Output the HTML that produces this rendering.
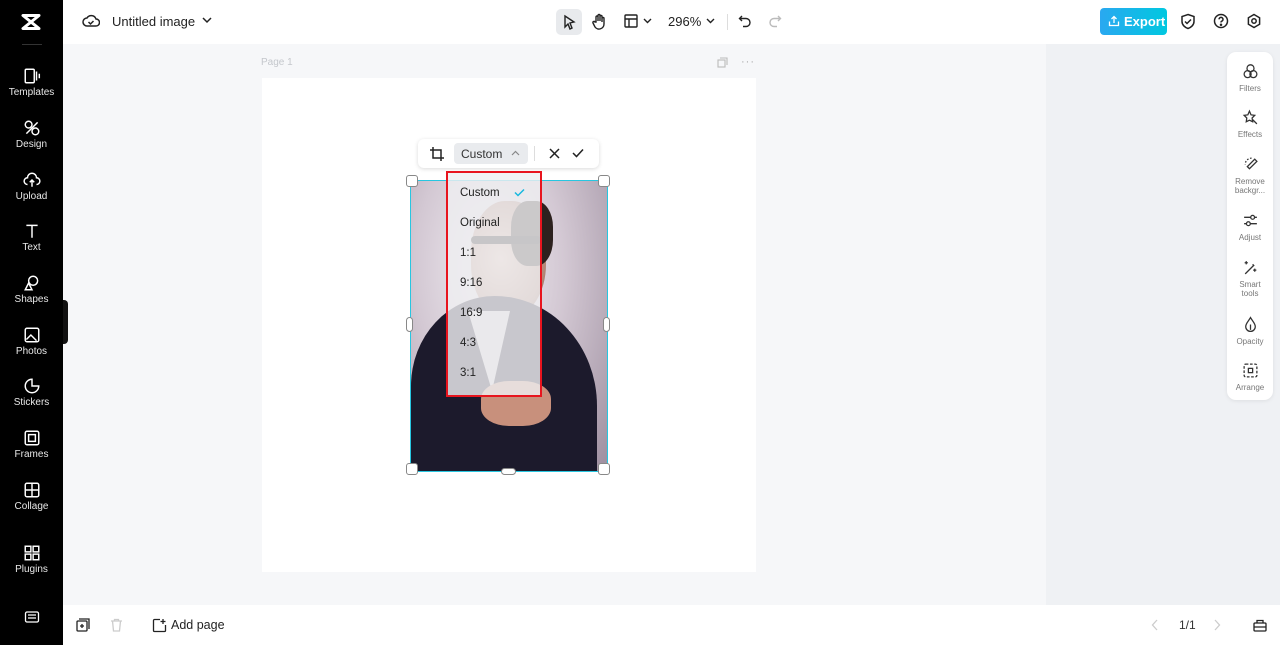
<!DOCTYPE html><html><head><style>
*{margin:0;padding:0;box-sizing:border-box}
body{width:1280px;height:645px;overflow:hidden;font-family:"Liberation Sans",sans-serif;background:#f6f7f9;position:relative;color:#1f2329}
.abs{position:absolute}
#side{left:0;top:0;width:63px;height:645px;background:#000;color:#fff}
.si{position:absolute;left:0;width:63px;text-align:center;font-size:10px;color:#e8e8e8}
.si svg{display:block;margin:0 auto 2px}
#top{left:63px;top:0;width:1217px;height:44px;background:#fff}
#bot{left:63px;top:605px;width:1217px;height:40px;background:#fff}
#right{left:1046px;top:44px;width:234px;height:561px;background:#eff1f4}
#rp{left:1227px;top:52px;width:46px;height:348px;background:#fff;border-radius:9px;box-shadow:0 1px 4px rgba(0,0,0,.08)}
.ri{position:absolute;left:0;width:46px;text-align:center;font-size:8px;color:#777;line-height:9px}
.ri svg{display:block;margin:0 auto 4px}
.dd{position:absolute;left:12px;font-size:11.5px;color:#222}
</style></head><body>
<div id="side" class="abs">
<svg class="abs" style="left:20px;top:12px" width="22" height="20" viewBox="0 0 22 20"><path d="M3 3.5h16L3 16.5h16z" fill="none" stroke="#fff" stroke-width="3" stroke-linejoin="round"/></svg>
<div class="abs" style="left:22px;top:44px;width:20px;height:1px;background:#333"></div>
<div class="si" style="top:67px"><svg width="18" height="18" viewBox="0 0 16 16" fill="none" stroke="#fff" stroke-width="1.3"><rect x="2" y="2" width="8" height="12" rx="1"/><path d="M12 4v8M14.5 6v4"/></svg>Templates</div>
<div class="si" style="top:119px"><svg width="18" height="18" viewBox="0 0 16 16" fill="none" stroke="#fff" stroke-width="1.3"><circle cx="5" cy="5" r="3"/><circle cx="11" cy="11" r="3"/><path d="M3 13l10-10"/></svg>Design</div>
<div class="si" style="top:171px"><svg width="18" height="18" viewBox="0 0 16 16" fill="none" stroke="#fff" stroke-width="1.3"><path d="M4 12a3 3 0 0 1 0-6 4 4 0 0 1 8 0 3 3 0 0 1 0 6M8 8v6M6 10l2-2 2 2"/></svg>Upload</div>
<div class="si" style="top:222px"><svg width="18" height="18" viewBox="0 0 16 16" fill="none" stroke="#fff" stroke-width="1.3"><path d="M3 3h10M8 3v11"/></svg>Text</div>
<div class="si" style="top:274px"><svg width="18" height="18" viewBox="0 0 16 16" fill="none" stroke="#fff" stroke-width="1.3"><circle cx="9" cy="6" r="4"/><path d="M2 14l3-6 3 6z"/></svg>Shapes</div>
<div class="si" style="top:326px"><svg width="18" height="18" viewBox="0 0 16 16" fill="none" stroke="#fff" stroke-width="1.3"><rect x="2" y="2" width="12" height="12" rx="1.5"/><path d="M3 12l4-4 5 5"/></svg>Photos</div>
<div class="si" style="top:377px"><svg width="18" height="18" viewBox="0 0 16 16" fill="none" stroke="#fff" stroke-width="1.3"><path d="M8 2a6 6 0 1 0 6 6H8z"/></svg>Stickers</div>
<div class="si" style="top:429px"><svg width="18" height="18" viewBox="0 0 16 16" fill="none" stroke="#fff" stroke-width="1.3"><rect x="2" y="2" width="12" height="12" rx="1.5"/><rect x="5" y="5" width="6" height="6"/></svg>Frames</div>
<div class="si" style="top:481px"><svg width="18" height="18" viewBox="0 0 16 16" fill="none" stroke="#fff" stroke-width="1.3"><rect x="2" y="2" width="12" height="12" rx="1.5"/><path d="M8 2v12M2 8h12"/></svg>Collage</div>
<div class="si" style="top:544px"><svg width="18" height="18" viewBox="0 0 16 16" fill="none" stroke="#fff" stroke-width="1.3"><rect x="2" y="2" width="5" height="5"/><rect x="9" y="2" width="5" height="5"/><rect x="2" y="9" width="5" height="5"/><rect x="9" y="9" width="5" height="5"/></svg>Plugins</div>
<div class="si" style="top:610px"><svg width="16" height="14" viewBox="0 0 16 14" fill="none" stroke="#fff" stroke-width="1.3"><rect x="1.5" y="2" width="13" height="10" rx="1.5"/><path d="M4 5h8M4 8h8"/></svg></div>
</div>
<div class="abs" style="left:63px;top:300px;width:5px;height:44px;background:#111;border-radius:0 4px 4px 0"></div>
<div id="top" class="abs">
<svg class="abs" style="left:19px;top:13px" width="18" height="16" viewBox="0 0 18 16" fill="none" stroke="#222" stroke-width="1.5"><path d="M5 13a4 4 0 0 1 0-8 5 5 0 0 1 9 1 3.5 3.5 0 0 1 0 7z"/><path d="M6.5 9l2 2 3-3"/></svg>
<div class="abs" style="left:49px;top:14px;font-size:13px;color:#222">Untitled image</div>
<svg class="abs" style="left:139px;top:16px" width="10" height="8" viewBox="0 0 10 8"><path d="M1 2l4 4 4-4" fill="none" stroke="#222" stroke-width="1.5"/></svg>
<div class="abs" style="left:493px;top:9px;width:26px;height:26px;background:#e8eaed;border-radius:5px"></div>
<svg class="abs" style="left:499px;top:14px" width="14" height="16" viewBox="0 0 14 16"><path d="M3 2l9 6-4 1 2 5-2 1-2-5-3 3z" fill="none" stroke="#222" stroke-width="1.4"/></svg>
<svg class="abs" style="left:528px;top:13px" width="16" height="18" viewBox="0 0 16 18" fill="none" stroke="#222" stroke-width="1.4"><path d="M5 9V4a1 1 0 0 1 2 0v4V2.5a1 1 0 0 1 2 0V8V3.5a1 1 0 0 1 2 0V9V5.5a1 1 0 0 1 2 0V11a5 5 0 0 1-9 3L2 10a1 1 0 0 1 2-1z"/></svg>
<svg class="abs" style="left:561px;top:14px" width="14" height="14" viewBox="0 0 14 14" fill="none" stroke="#222" stroke-width="1.4"><rect x="1" y="1" width="12" height="12" rx="1"/><path d="M1 5h12M5 5v8"/></svg>
<svg class="abs" style="left:580px;top:18px" width="9" height="6" viewBox="0 0 9 6"><path d="M1 1l3.5 3.5L8 1" fill="none" stroke="#222" stroke-width="1.4"/></svg>
<div class="abs" style="left:605px;top:14px;font-size:13px;color:#222">296%</div>
<svg class="abs" style="left:643px;top:18px" width="9" height="6" viewBox="0 0 9 6"><path d="M1 1l3.5 3.5L8 1" fill="none" stroke="#222" stroke-width="1.4"/></svg>
<div class="abs" style="left:664px;top:14px;width:1px;height:16px;background:#ddd"></div>
<svg class="abs" style="left:675px;top:14px" width="14" height="14" viewBox="0 0 14 14" fill="none" stroke="#222" stroke-width="1.4"><path d="M4 2L1.5 4.5 4 7M1.5 4.5H8a4 4 0 0 1 0 8H5"/></svg>
<svg class="abs" style="left:705px;top:14px" width="14" height="14" viewBox="0 0 14 14" fill="none" stroke="#bbb" stroke-width="1.4"><path d="M10 2l2.5 2.5L10 7M12.5 4.5H6a4 4 0 0 0 0 8h3"/></svg>
<div class="abs" style="left:1037px;top:8px;width:67px;height:27px;border-radius:4px;background:linear-gradient(90deg,#2aa8f0,#00c8e0)"></div>
<svg class="abs" style="left:1045px;top:15px" width="12" height="12" viewBox="0 0 12 12" fill="none" stroke="#fff" stroke-width="1.3"><path d="M6 8V1.5M3.5 4L6 1.5 8.5 4M1.5 6.5v4h9v-4"/></svg>
<div class="abs" style="left:1061px;top:14px;font-size:13px;font-weight:bold;color:#fff">Export</div>
<svg class="abs" style="left:1117px;top:13px" width="16" height="17" viewBox="0 0 16 17" fill="none" stroke="#222" stroke-width="1.5"><path d="M8 1.5l6 2v5c0 3.5-3 6-6 7-3-1-6-3.5-6-7v-5z"/><path d="M5 8.5l2 2 4-4"/></svg>
<svg class="abs" style="left:1150px;top:13px" width="16" height="16" viewBox="0 0 16 16" fill="none" stroke="#222" stroke-width="1.5"><circle cx="8" cy="8" r="6.5"/><path d="M6 6.3a2 2 0 1 1 2.5 2c-.5.2-.5.7-.5 1.2"/><circle cx="8" cy="11.8" r=".5" fill="#222"/></svg>
<svg class="abs" style="left:1183px;top:13px" width="16" height="16" viewBox="0 0 16 16" fill="none" stroke="#222" stroke-width="1.5"><path d="M8 1.5l5.6 3.25v6.5L8 14.5l-5.6-3.25v-6.5z"/><circle cx="8" cy="8" r="2.2"/></svg>
</div>
<div id="right" class="abs"></div>
<div class="abs" style="left:261px;top:57px;font-size:10px;color:#c4c7cc">Page 1</div>
<svg class="abs" style="left:717px;top:57px" width="11" height="11" viewBox="0 0 11 11" fill="none" stroke="#bbb" stroke-width="1.1"><rect x="1" y="3" width="7" height="7"/><path d="M3 1h7v7"/></svg>
<div class="abs" style="left:741px;top:56px;font-size:11px;color:#aaa;letter-spacing:1px">···</div>
<div class="abs" style="left:262px;top:78px;width:494px;height:494px;background:#fff"></div>
<!-- photo -->
<div class="abs" style="left:411px;top:181px;width:196px;height:290px;overflow:hidden;background:radial-gradient(ellipse at 40% 30%,#f1edf2 0%,#d3c8d3 45%,#9d8e9f 100%)">
<div class="abs" style="left:60px;top:20px;width:75px;height:115px;border-radius:45%;background:radial-gradient(ellipse at 40% 50%,#e8c7b8,#b28676 70%,#5a3a30)"></div>
<div class="abs" style="left:100px;top:20px;width:42px;height:65px;border-radius:40%;background:#2c211e"></div>
<div class="abs" style="left:60px;top:55px;width:70px;height:8px;border-radius:4px;background:#1a1515"></div>
<div class="abs" style="left:0;top:115px;width:186px;height:200px;border-radius:45% 55% 0 0;background:#1c1a2c"></div>
<div class="abs" style="left:45px;top:130px;width:60px;height:80px;background:#d9d4d8;clip-path:polygon(20% 0,90% 0,60% 100%)"></div>
<div class="abs" style="left:70px;top:200px;width:70px;height:45px;border-radius:40%;background:#c8907c"></div>
</div>
<div class="abs" style="left:410px;top:180px;width:198px;height:292px;border:1.5px solid #28c6e0"></div>
<div class="abs" style="left:406px;top:175px;width:12px;height:12px;border:1.5px solid #888;border-radius:3px;background:#fff"></div>
<div class="abs" style="left:598px;top:175px;width:12px;height:12px;border:1.5px solid #888;border-radius:3px;background:#fff"></div>
<div class="abs" style="left:406px;top:463px;width:12px;height:12px;border:1.5px solid #888;border-radius:3px;background:#fff"></div>
<div class="abs" style="left:598px;top:463px;width:12px;height:12px;border:1.5px solid #888;border-radius:3px;background:#fff"></div>
<div class="abs" style="left:406px;top:317px;width:7px;height:15px;border:1.2px solid #888;border-radius:4px;background:#fff"></div>
<div class="abs" style="left:603px;top:317px;width:7px;height:15px;border:1.2px solid #888;border-radius:4px;background:#fff"></div>
<div class="abs" style="left:501px;top:468px;width:15px;height:7px;border:1.2px solid #888;border-radius:4px;background:#fff"></div>
<!-- toolbar -->
<div class="abs" style="left:418px;top:139px;width:181px;height:29px;background:#fff;border-radius:6px;box-shadow:0 1px 4px rgba(0,0,0,.15)"></div>
<svg class="abs" style="left:429px;top:146px" width="16" height="16" viewBox="0 0 16 16" fill="none" stroke="#222" stroke-width="1.5"><path d="M4 1v11h11M1 4h11v11"/></svg>
<div class="abs" style="left:454px;top:143px;width:74px;height:21px;background:#e9ebee;border-radius:4px"></div>
<div class="abs" style="left:461px;top:147px;font-size:12px;color:#333">Custom</div>
<svg class="abs" style="left:511px;top:150px" width="9" height="6" viewBox="0 0 9 6"><path d="M1 5l3.5-3.5L8 5" fill="none" stroke="#888" stroke-width="1.2"/></svg>
<div class="abs" style="left:534px;top:146px;width:1px;height:15px;background:#ddd"></div>
<svg class="abs" style="left:549px;top:148px" width="11" height="11" viewBox="0 0 11 11"><path d="M1 1l9 9M10 1l-9 9" stroke="#222" stroke-width="1.5"/></svg>
<svg class="abs" style="left:572px;top:148px" width="12" height="10" viewBox="0 0 12 10"><path d="M1 5l3.5 3.5L11 1.5" fill="none" stroke="#222" stroke-width="1.5"/></svg>
<!-- dropdown -->
<div class="abs" style="left:446px;top:171px;width:96px;height:226px;border:2px solid #e8141e;background:rgba(238,238,240,.82)">
<div class="dd" style="top:14px">Custom</div>
<svg class="abs" style="left:66px;top:15px" width="11" height="9" viewBox="0 0 11 9"><path d="M1 4.5l3 3L10 1.5" fill="none" stroke="#18b8de" stroke-width="1.5"/></svg>
<div class="dd" style="top:44px">Original</div>
<div class="dd" style="top:74px">1:1</div>
<div class="dd" style="top:104px">9:16</div>
<div class="dd" style="top:134px">16:9</div>
<div class="dd" style="top:164px">4:3</div>
<div class="dd" style="top:194px">3:1</div>
</div>
<div id="rp" class="abs">
<div class="ri" style="top:11px"><svg width="17" height="17" viewBox="0 0 16 16" fill="none" stroke="#333" stroke-width="1.2"><circle cx="8" cy="5" r="3.3"/><circle cx="5.3" cy="10.5" r="3.3"/><circle cx="10.7" cy="10.5" r="3.3"/></svg>Filters</div>
<div class="ri" style="top:57px"><svg width="17" height="17" viewBox="0 0 16 16" fill="none" stroke="#333" stroke-width="1.2"><path d="M7 2l1.5 3.5 3.5.5-2.5 2.5.5 3.5L7 10.5 4 12l.5-3.5L2 6l3.5-.5zM10 10l4 4"/></svg>Effects</div>
<div class="ri" style="top:104px"><svg width="17" height="17" viewBox="0 0 16 16" fill="none" stroke="#333" stroke-width="1.2"><path d="M12 3l2 2-7 7-2-2z" /><path d="M9 2a6 6 0 0 0-6 6" stroke-dasharray="1.5 1.5"/></svg>Remove<br>backgr...</div>
<div class="ri" style="top:160px"><svg width="17" height="17" viewBox="0 0 16 16" fill="none" stroke="#333" stroke-width="1.2"><path d="M2 5h12M2 11h12"/><circle cx="10" cy="5" r="1.8" fill="#fff"/><circle cx="6" cy="11" r="1.8" fill="#fff"/></svg>Adjust</div>
<div class="ri" style="top:207px"><svg width="17" height="17" viewBox="0 0 16 16" fill="none" stroke="#333" stroke-width="1.2"><path d="M3 14l8-8M10 5l1.5 1.5M4 2v3M2.5 3.5h3M12 9v3M10.5 10.5h3"/></svg>Smart<br>tools</div>
<div class="ri" style="top:264px"><svg width="17" height="17" viewBox="0 0 16 16" fill="none" stroke="#333" stroke-width="1.2"><path d="M8 1.5C6 5 3.5 7 3.5 10a4.5 4.5 0 0 0 9 0c0-3-2.5-5-4.5-8.5zM8 8v5"/></svg>Opacity</div>
<div class="ri" style="top:310px"><svg width="17" height="17" viewBox="0 0 16 16" fill="none" stroke="#333" stroke-width="1.2"><rect x="2" y="2" width="12" height="12" rx="1.5" stroke-dasharray="2.5 1.5"/><rect x="6" y="6" width="4" height="4"/></svg>Arrange</div>
</div>
<div id="bot" class="abs">
<svg class="abs" style="left:13px;top:13px" width="14" height="14" viewBox="0 0 14 14" fill="none" stroke="#222" stroke-width="1.3"><rect x="1" y="3" width="10" height="10" rx="1"/><path d="M3 1h10v10M6 6v4M4 8h4"/></svg>
<svg class="abs" style="left:47px;top:13px" width="13" height="14" viewBox="0 0 13 14" fill="none" stroke="#ccc" stroke-width="1.3"><path d="M1 3h11M4.5 3V1.5h4V3M2.5 3l1 10h6l1-10"/></svg>
<svg class="abs" style="left:89px;top:13px" width="15" height="15" viewBox="0 0 15 15" fill="none" stroke="#222" stroke-width="1.3"><path d="M8 1.5H2.5a1 1 0 0 0-1 1v10a1 1 0 0 0 1 1h10a1 1 0 0 0 1-1V7M11 1v5M8.5 3.5h5"/></svg>
<div class="abs" style="left:108px;top:13px;font-size:12.5px;color:#222">Add page</div>
<svg class="abs" style="left:1088px;top:14px" width="8" height="12" viewBox="0 0 8 12"><path d="M6 1L1.5 6 6 11" fill="none" stroke="#ccc" stroke-width="1.3"/></svg>
<div class="abs" style="left:1116px;top:13px;font-size:12px;color:#333">1/1</div>
<svg class="abs" style="left:1150px;top:14px" width="8" height="12" viewBox="0 0 8 12"><path d="M2 1l4.5 5L2 11" fill="none" stroke="#ccc" stroke-width="1.3"/></svg>
<svg class="abs" style="left:1190px;top:13px" width="14" height="14" viewBox="0 0 14 14" fill="none" stroke="#222" stroke-width="1.3"><rect x="1" y="5" width="12" height="8" rx="1"/><path d="M4 5V2.5h6V5M1 9h12"/></svg>
</div>
</body></html>
